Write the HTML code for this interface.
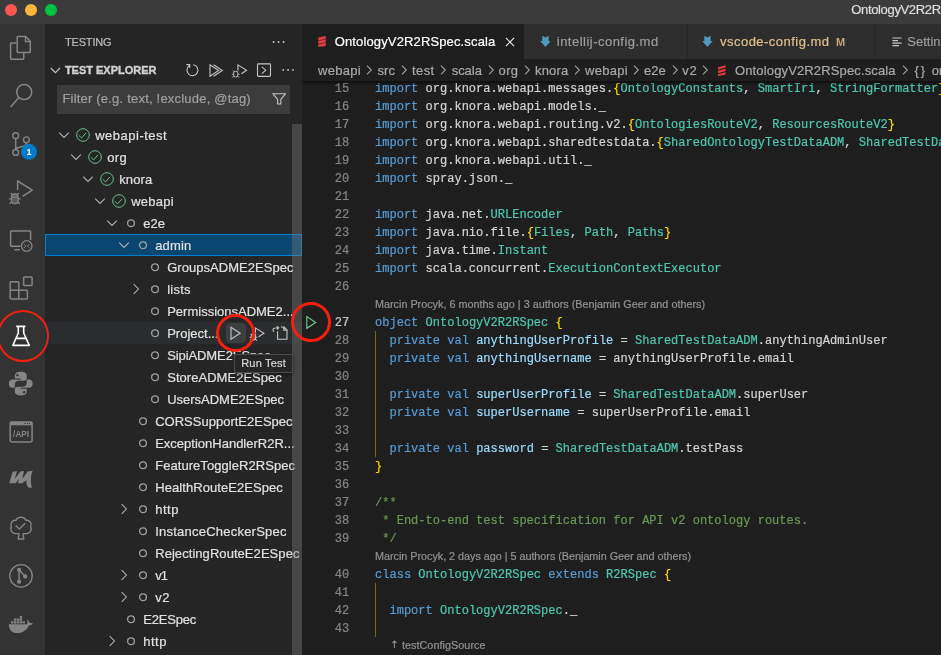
<!DOCTYPE html>
<html>
<head>
<meta charset="utf-8">
<title>OntologyV2R2RSpec.scala</title>
<style>
html,body{margin:0;padding:0;}
body{-webkit-text-stroke-width:0.2px;will-change:transform;width:941px;height:655px;overflow:hidden;background:#1e1e1e;position:relative;font-family:"Liberation Sans",sans-serif;font-size:13px;color:#cccccc;}
*{box-sizing:border-box;}
.abs{position:absolute;}
#titlebar{left:0;top:0;width:941px;height:24px;background:#3b3b3b;}
.tl{position:absolute;top:4px;width:12px;height:12px;border-radius:50%;}
#title{letter-spacing:-0.350px;position:absolute;left:851.300px;top:2px;font-size:13px;color:#dedede;white-space:nowrap;}
#activity{left:0;top:24px;width:45px;height:631px;background:#333333;}
#activity svg{position:absolute;}
#sidebar{left:45px;top:24px;width:257px;height:631px;background:#252526;overflow:hidden;}
#editor{left:302px;top:24px;width:639px;height:631px;background:#1e1e1e;overflow:hidden;}
.sbtitle{position:absolute;left:19.900px;top:12px;font-size:11px;color:#bbbbbb;letter-spacing:0.45px;}
.sechead{position:absolute;left:19.900px;top:40px;font-size:11px;font-weight:bold;color:#d0d0d0;-webkit-text-stroke-width:0.4px;}
#sidebar>svg{position:absolute;z-index:2;}
#filter{position:absolute;left:12px;top:60.800px;width:233px;height:28.800px;background:#3c3c3c;}
#filter span{position:absolute;left:5.4px;top:6px;font-size:13px;color:#a0a0a0;white-space:nowrap;}
#filter svg{position:absolute;}
.row{position:absolute;left:0;width:257px;height:22px;line-height:22px;white-space:nowrap;color:#e0e0e0;font-size:13px;}
.row .t{position:absolute;top:1px;}
.row svg{position:absolute;}
.sel{position:absolute;left:0;top:0;width:257px;height:22px;background:#094771;border:1px solid #007fd4;}
.hov{position:absolute;left:0;top:0;width:257px;height:22px;background:#2a2d2e;}
#sscroll{position:absolute;left:247px;top:100px;width:10px;height:531px;background:rgba(121,121,121,0.4);z-index:5;}
#tabs{position:absolute;left:0;top:0;width:639px;height:35px;background:#252526;z-index:4;}
.tab{position:absolute;top:0;height:35px;background:#2d2d2d;font-size:13px;line-height:35px;white-space:nowrap;}
.tab .lbl{position:absolute;top:0;}
.tab svg{position:absolute;}
#crumbs{position:absolute;left:0;top:35px;width:639px;height:22px;background:#1e1e1e;line-height:22px;font-size:13px;color:#a9a9a9;white-space:nowrap;z-index:3;box-shadow:0 2px 3px rgba(0,0,0,0.55);}
#crumbs span{position:absolute;top:0.700px;}
#crumbs svg{position:absolute;}
#code{position:absolute;left:0;top:0;width:639px;height:631px;font-family:"Liberation Mono",monospace;font-size:12.04px;color:#d4d4d4;}
#code svg{position:absolute;}
.ln{position:absolute;left:0;height:18px;line-height:19.400px;white-space:pre;}
.ln .n{position:absolute;left:0;width:47.200px;text-align:right;color:#858585;}
.ln .n.act{color:#c6c6c6;}
.ln .c{position:absolute;left:73px;}
.lens{position:absolute;left:73px;height:18px;line-height:16.600px;font-family:"Liberation Sans",sans-serif;font-size:10.8px;color:#939393;white-space:nowrap;}
.guide{position:absolute;width:1px;background:#74651a;}
.k{color:#569cd6}.ty{color:#4ec9b0}.v{color:#9cdcfe}.cm{color:#6a9955}.b{color:#ffd700}
.ring{position:absolute;border:3px solid #f3200f;border-radius:50%;z-index:20;}
#tooltip{position:absolute;left:233.900px;top:354px;width:58.700px;height:18.500px;background:#252526;border:1px solid #4a4a4a;font-size:11px;line-height:16px;color:#d8d8d8;z-index:15;white-space:nowrap;box-shadow:-1.500px 0 0 #252526,0 1px 3px rgba(0,0,0,0.5);}
#tooltip span{position:absolute;left:6.300px;top:0px;}

</style>
</head>
<body>
<div id="titlebar" class="abs">
  <div class="tl" style="left:5px;background:#ff5651"></div>
  <div class="tl" style="left:25px;background:#ffb63b"></div>
  <div class="tl" style="left:45px;background:#00c544"></div>
  <div id="title">OntologyV2R2RSpec.scala — webapi</div>
</div>
<div id="activity" class="abs">
<svg style="left:0;top:0" width="45" height="631" viewBox="0 24 45 631" fill="none" stroke="#858585" stroke-width="1.5" stroke-linejoin="round">
<!-- files -->
<path d="M17.9 36.6h7.8l4.6 4.6v10.7q0 .7-.7.7H17.9q-.7 0-.7-.7V37.3q0-.7.7-.7z"/>
<path d="M25.4 36.9v4.6h4.6" stroke-width="1.3"/>
<path d="M16.6 43h-5.3q-.7 0-.7.7v14.8q0 .7.7.7H23q.7 0 .7-.7v-5.2"/>
<!-- search -->
<circle cx="24.2" cy="92.1" r="7.5"/>
<path d="M18.9 97.6L10.6 106.9"/>
<!-- scm -->
<g stroke-width="1.4">
<circle cx="15.7" cy="135.7" r="2.9"/><circle cx="15.7" cy="152.4" r="2.9"/><circle cx="26.4" cy="139.8" r="2.9"/>
<path d="M15.7 138.6V149.5M26.4 142.7C26.4 147.5 19 146.3 15.9 148.6"/>
</g>
<circle cx="29" cy="151.8" r="8" fill="#007acc" stroke="none"/>
<text x="29" y="155" font-family="Liberation Sans, sans-serif" font-size="9" font-weight="bold" fill="#ffffff" stroke="none" text-anchor="middle">1</text>
<!-- debug -->
<path d="M17.6 190V181L32.2 190.2L22.6 196.4"/>
<g stroke-width="1.3">
<path d="M11.5 197.2q0-3.2 3.3-3.2t3.3 3.2v3.4q0 3.2-3.3 3.2t-3.3-3.2z" fill="#5a5a5a"/>
<path d="M12.3 194.8l-1.6-1.8M17.3 194.8l1.6-1.8M11.5 198.9H8.9M18.1 198.9h2.6M11.8 201.8l-2.2 2M17.8 201.8l2.2 2M11.5 197.2h6.6"/>
</g>
<!-- remote explorer -->
<path d="M20.5 246.3H11.3q-.7 0-.7-.7V231.7q0-.7.7-.7h18.6q.7 0 .7.7v8.3M14.5 249.8h5.3"/>
<circle cx="26.7" cy="246" r="5.3" stroke-width="1.3"/>
<path d="M24.2 244.2l1.7 1.8l-1.7 1.8M29.2 244.2l-1.7 1.8l1.7 1.8" stroke-width="1"/>
<!-- extensions -->
<path d="M10.9 281.7h7.2q.7 0 .7.7v7.9h7.9q.7 0 .7.7v7.2q0 .7-.7.7H10.9q-.7 0-.7-.7V282.4q0-.7.7-.7zM10.2 290.3h8.6v8.6"/>
<rect x="23.6" y="277.1" width="8.5" height="8.3" rx="1"/>
<!-- flask -->
<g stroke="#ffffff" stroke-width="1.6">
<path d="M16.2 326.4h9.2M18.3 326.4v6.6L12.9 345.4H29.3L23.7 333v-6.6M15.5 338.4h11.2"/>
</g>
<!-- python -->
<g transform="translate(8.9 371.8) scale(0.99)" fill="#858585" stroke="none" fill-rule="evenodd">
<path d="M11.9 0C8 0 6 1.5 6 4v2.8h6.1v1H3.6C1.3 7.800 0 9.800 0 12s1.200 4.200 3.600 4.200H6V13C6 10.600 7.600 9 9.900 9h5.300C17 9 18 8 18 6.200V4C18 1.500 15.600 0 11.900 0zM8.600 2.200a1.200 1.200 0 1 1 0 2.400a1.200 1.200 0 0 1 0-2.400z"/>
<path d="M12.100 24C16 24 18 22.500 18 20v-2.800h-6.100v-1h8.500c2.300 0 3.600-2 3.600-4.200s-1.200-4.200-3.600-4.200H18V11c0 2.400-1.600 4-3.900 4H8.800C7 15 6 16 6 17.800V20c0 2.500 2.400 4 6.100 4zM15.400 21.800a1.200 1.200 0 1 1 0-2.400a1.200 1.200 0 0 1 0 2.400z"/>
</g>
<!-- api -->
<rect x="10.2" y="422" width="21.9" height="19.9" rx="1.4"/>
<path d="M10.2 423.6h21.9" stroke-width="3.4"/>
<path d="M25 423.4h.1M27.2 423.4h.1M29.400 423.4h.1" stroke="#333" stroke-width="1.1" stroke-linecap="round"/>
<text x="21.1" y="437" font-family="Liberation Sans, sans-serif" font-size="8.6" font-weight="bold" fill="#858585" stroke="none" text-anchor="middle" textLength="16" lengthAdjust="spacingAndGlyphs">/API</text>
<!-- metals -->
<path fill="#858585" stroke="none" d="M9.2 483.200L12.600 472L17 471L14.800 479L20.300 471.600L24 471L22.300 479L27.600 471.600L32.700 470.800C30.600 475 30.400 482 31.900 487.600C28.300 488.800 26.200 486 26.400 480.200L22.200 483.200L18 483.200L19 478.700L15.600 483.200Z"/>
<!-- tree check -->
<g stroke-width="1.4">
<path d="M18.400 533.400C13.500 534.800 9.400 531.300 11.300 527C9.600 523.400 12.500 519.800 16 520.400C17.500 516.200 24.500 516.200 26 520.400C29.500 519.800 32.400 523.400 30.700 527C32.600 531.300 28.500 534.800 23.600 533.400"/>
<path d="M19.100 533L18.200 539H23.800L22.900 533"/>
<path d="M15.700 525.500L19.400 528.900L25.200 523.200"/>
</g>
<!-- git graph -->
<g stroke-width="1.3">
<circle cx="21" cy="575.900" r="11.200"/>
<path d="M19.100 569.800V581.700M19.100 569.800L25.200 576.400" stroke-width="1.400"/>
<circle cx="19.100" cy="569.800" r="1.500" fill="#858585"/><circle cx="19.100" cy="581.700" r="1.500" fill="#858585"/><circle cx="25.200" cy="576.400" r="1.500" fill="#858585"/>
</g>
<!-- docker -->
<g fill="#858585" stroke="none">
<path d="M8.800 624.200H26.800C27.800 622.800 27.700 620.800 27 619.400C28.600 620.400 29.400 621.700 29.600 622.900C30.800 622.500 32 622.700 32.800 623.300C32 625 30.300 625.600 28.900 625.500C26.600 631 21.600 633.100 17.400 633.100C12 633.100 8.800 630 8.800 624.200Z"/>
<path d="M11 621.200h2.400v2.400H11zM13.900 621.200h2.400v2.400h-2.400zM16.800 621.200h2.400v2.400h-2.400zM19.700 621.200h2.400v2.400h-2.400zM22.600 621.200h2.400v2.400h-2.400zM13.900 618.600h2.400v2.200h-2.400zM16.800 618.600h2.400v2.200h-2.400zM19.700 618.600h2.400v2.200h-2.400zM19.700 616h2.400v2.200h-2.400z"/>
</g>
</svg>

</div>
<div id="sidebar" class="abs">
  <div class="sbtitle" style="letter-spacing:-0.153px;">TESTING</div>
  <div class="sechead" style="letter-spacing:-0.014px;">TEST EXPLORER</div>
  <svg style="left:0;top:0" width="257" height="100" viewBox="45 24 257 100" fill="none" stroke="#c5c5c5" stroke-width="1.1">
<!-- title ... -->
<g fill="#c5c5c5" stroke="none"><circle cx="273.600" cy="42" r="0.950"/><circle cx="278.600" cy="42" r="0.950"/><circle cx="283.600" cy="42" r="0.950"/>
<circle cx="283.200" cy="69.900" r="0.950"/><circle cx="288.100" cy="69.900" r="0.950"/><circle cx="293" cy="69.900" r="0.950"/></g>
<!-- section chevron -->
<path d="M50.800 68L55.400 72.600L60 68" stroke-width="1.150"/>
<!-- refresh -->
<path d="M189.300 65.600A5.500 5.500 0 1 0 193.300 64.700M186.400 64.600h3.300v3.300" stroke-width="1.100"/>
<!-- run all -->
<path d="M210 64.700V76.300L218.600 70.500ZM213.600 64.700L222.300 70.500L213.600 76.300" stroke-linejoin="miter"/>
<!-- debug all -->
<path d="M237.900 70V64.900L246.600 70.300L241.400 73.700"/>
<g stroke-width="0.9">
<path d="M233.600 73.200q0-2 2.100-2t2.100 2v1.800q0 2-2.100 2t-2.100-2z"/>
<path d="M234 71.700l-1.100-1.200M237.400 71.700l1.100-1.200M233.600 74.200h-1.800M237.800 74.200h1.800M233.800 76l-1.500 1.500M237.600 76l1.500 1.500"/>
</g>
<!-- terminal box -->
<rect x="257.500" y="63.900" width="13" height="12.500" rx="0.800"/>
<path d="M261.800 66.800L265.800 70.200L261.800 73.600"/>
<!-- filter funnel -->
<path d="M272.800 93.700H285.600L280.800 99.300V104H277.600V99.300Z" stroke-linejoin="round"/>
</svg>

  <div id="filter"><span style="letter-spacing:0.205px;">Filter (e.g. text, !exclude, @tag)</span></div>
  <div id="tree">
<div class="row" style="top:100px"><svg style="left:11px;top:3px" width="16" height="16" viewBox="0 0 16 16"><path d="M3.2 5.7 L8 10.4 L12.8 5.7" fill="none" stroke="#b4b4b4" stroke-width="1.05"/></svg><svg style="left:30px;top:3px" width="16" height="16" viewBox="0 0 16 16"><circle cx="8" cy="8" r="6.3" fill="none" stroke="#6cc08a" stroke-width="1"/><path d="M3.9 8.4 L6.5 10.9 L11 5.9" fill="none" stroke="#6cc08a" stroke-width="1"/></svg><span class="t" style="left:50.2px;letter-spacing:0.501px;">webapi-test</span></div>
<div class="row" style="top:122px"><svg style="left:23px;top:3px" width="16" height="16" viewBox="0 0 16 16"><path d="M3.2 5.7 L8 10.4 L12.8 5.7" fill="none" stroke="#b4b4b4" stroke-width="1.05"/></svg><svg style="left:42px;top:3px" width="16" height="16" viewBox="0 0 16 16"><circle cx="8" cy="8" r="6.3" fill="none" stroke="#6cc08a" stroke-width="1"/><path d="M3.9 8.4 L6.5 10.9 L11 5.9" fill="none" stroke="#6cc08a" stroke-width="1"/></svg><span class="t" style="left:62.2px;letter-spacing:0.334px;">org</span></div>
<div class="row" style="top:144px"><svg style="left:35px;top:3px" width="16" height="16" viewBox="0 0 16 16"><path d="M3.2 5.7 L8 10.4 L12.8 5.7" fill="none" stroke="#b4b4b4" stroke-width="1.05"/></svg><svg style="left:54px;top:3px" width="16" height="16" viewBox="0 0 16 16"><circle cx="8" cy="8" r="6.3" fill="none" stroke="#6cc08a" stroke-width="1"/><path d="M3.9 8.4 L6.5 10.9 L11 5.9" fill="none" stroke="#6cc08a" stroke-width="1"/></svg><span class="t" style="left:74.2px;letter-spacing:0.154px;">knora</span></div>
<div class="row" style="top:166px"><svg style="left:47px;top:3px" width="16" height="16" viewBox="0 0 16 16"><path d="M3.2 5.7 L8 10.4 L12.8 5.7" fill="none" stroke="#b4b4b4" stroke-width="1.05"/></svg><svg style="left:66px;top:3px" width="16" height="16" viewBox="0 0 16 16"><circle cx="8" cy="8" r="6.3" fill="none" stroke="#6cc08a" stroke-width="1"/><path d="M3.9 8.4 L6.5 10.9 L11 5.9" fill="none" stroke="#6cc08a" stroke-width="1"/></svg><span class="t" style="left:86.2px;letter-spacing:0.266px;">webapi</span></div>
<div class="row" style="top:188px"><svg style="left:59px;top:3px" width="16" height="16" viewBox="0 0 16 16"><path d="M3.2 5.7 L8 10.4 L12.8 5.7" fill="none" stroke="#b4b4b4" stroke-width="1.05"/></svg><svg style="left:77.5px;top:3px" width="16" height="16" viewBox="0 0 16 16"><circle cx="8" cy="8.2" r="3.4" fill="none" stroke="#9c9c9c" stroke-width="1.35"/></svg><span class="t" style="left:98.2px;letter-spacing:0.032px;">e2e</span></div>
<div class="row" style="top:210px"><div class="sel"></div><svg style="left:71px;top:3px" width="16" height="16" viewBox="0 0 16 16"><path d="M3.2 5.7 L8 10.4 L12.8 5.7" fill="none" stroke="#b4b4b4" stroke-width="1.05"/></svg><svg style="left:89.5px;top:3px" width="16" height="16" viewBox="0 0 16 16"><circle cx="8" cy="8.2" r="3.4" fill="none" stroke="#9c9c9c" stroke-width="1.35"/></svg><span class="t" style="left:110.2px;letter-spacing:0.156px;">admin</span></div>
<div class="row" style="top:232px"><svg style="left:101.5px;top:3px" width="16" height="16" viewBox="0 0 16 16"><circle cx="8" cy="8.2" r="3.4" fill="none" stroke="#9c9c9c" stroke-width="1.35"/></svg><span class="t" style="left:122.2px;letter-spacing:0.035px;">GroupsADME2ESpec</span></div>
<div class="row" style="top:254px"><svg style="left:83px;top:3px" width="16" height="16" viewBox="0 0 16 16"><path d="M5.7 3.2 L10.4 8 L5.7 12.8" fill="none" stroke="#b4b4b4" stroke-width="1.05"/></svg><svg style="left:101.5px;top:3px" width="16" height="16" viewBox="0 0 16 16"><circle cx="8" cy="8.2" r="3.4" fill="none" stroke="#9c9c9c" stroke-width="1.35"/></svg><span class="t" style="left:122.2px;letter-spacing:0.222px;">lists</span></div>
<div class="row" style="top:276px"><svg style="left:101.5px;top:3px" width="16" height="16" viewBox="0 0 16 16"><circle cx="8" cy="8.2" r="3.4" fill="none" stroke="#9c9c9c" stroke-width="1.35"/></svg><span class="t" style="left:122.2px;">PermissionsADME2...</span></div>
<div class="row" style="top:298px"><div class="hov"></div><svg style="left:101.5px;top:3px" width="16" height="16" viewBox="0 0 16 16"><circle cx="8" cy="8.2" r="3.4" fill="none" stroke="#9c9c9c" stroke-width="1.35"/></svg><span class="t" style="left:122.2px;">Project...</span></div>
<div class="row" style="top:320px"><svg style="left:101.5px;top:3px" width="16" height="16" viewBox="0 0 16 16"><circle cx="8" cy="8.2" r="3.4" fill="none" stroke="#9c9c9c" stroke-width="1.35"/></svg><span class="t" style="left:122.2px;letter-spacing:-0.092px;">SipiADME2ESpec</span></div>
<div class="row" style="top:342px"><svg style="left:101.5px;top:3px" width="16" height="16" viewBox="0 0 16 16"><circle cx="8" cy="8.2" r="3.4" fill="none" stroke="#9c9c9c" stroke-width="1.35"/></svg><span class="t" style="left:122.2px;letter-spacing:0.035px;">StoreADME2ESpec</span></div>
<div class="row" style="top:364px"><svg style="left:101.5px;top:3px" width="16" height="16" viewBox="0 0 16 16"><circle cx="8" cy="8.2" r="3.4" fill="none" stroke="#9c9c9c" stroke-width="1.35"/></svg><span class="t" style="left:122.2px;letter-spacing:-0.01px;">UsersADME2ESpec</span></div>
<div class="row" style="top:386px"><svg style="left:89.5px;top:3px" width="16" height="16" viewBox="0 0 16 16"><circle cx="8" cy="8.2" r="3.4" fill="none" stroke="#9c9c9c" stroke-width="1.35"/></svg><span class="t" style="left:110.2px;letter-spacing:0.006px;">CORSSupportE2ESpec</span></div>
<div class="row" style="top:408px"><svg style="left:89.5px;top:3px" width="16" height="16" viewBox="0 0 16 16"><circle cx="8" cy="8.2" r="3.4" fill="none" stroke="#9c9c9c" stroke-width="1.35"/></svg><span class="t" style="left:110.2px;">ExceptionHandlerR2R...</span></div>
<div class="row" style="top:430px"><svg style="left:89.5px;top:3px" width="16" height="16" viewBox="0 0 16 16"><circle cx="8" cy="8.2" r="3.4" fill="none" stroke="#9c9c9c" stroke-width="1.35"/></svg><span class="t" style="left:110.2px;letter-spacing:0.053px;">FeatureToggleR2RSpec</span></div>
<div class="row" style="top:452px"><svg style="left:89.5px;top:3px" width="16" height="16" viewBox="0 0 16 16"><circle cx="8" cy="8.2" r="3.4" fill="none" stroke="#9c9c9c" stroke-width="1.35"/></svg><span class="t" style="left:110.2px;letter-spacing:0.068px;">HealthRouteE2ESpec</span></div>
<div class="row" style="top:474px"><svg style="left:71px;top:3px" width="16" height="16" viewBox="0 0 16 16"><path d="M5.7 3.2 L10.4 8 L5.7 12.8" fill="none" stroke="#b4b4b4" stroke-width="1.05"/></svg><svg style="left:89.5px;top:3px" width="16" height="16" viewBox="0 0 16 16"><circle cx="8" cy="8.2" r="3.4" fill="none" stroke="#9c9c9c" stroke-width="1.35"/></svg><span class="t" style="left:110.2px;letter-spacing:0.528px;">http</span></div>
<div class="row" style="top:496px"><svg style="left:89.5px;top:3px" width="16" height="16" viewBox="0 0 16 16"><circle cx="8" cy="8.2" r="3.4" fill="none" stroke="#9c9c9c" stroke-width="1.35"/></svg><span class="t" style="left:110.2px;letter-spacing:0.227px;">InstanceCheckerSpec</span></div>
<div class="row" style="top:518px"><svg style="left:89.5px;top:3px" width="16" height="16" viewBox="0 0 16 16"><circle cx="8" cy="8.2" r="3.4" fill="none" stroke="#9c9c9c" stroke-width="1.35"/></svg><span class="t" style="left:110.2px;letter-spacing:0.057px;">RejectingRouteE2ESpec</span></div>
<div class="row" style="top:540px"><svg style="left:71px;top:3px" width="16" height="16" viewBox="0 0 16 16"><path d="M5.7 3.2 L10.4 8 L5.7 12.8" fill="none" stroke="#b4b4b4" stroke-width="1.05"/></svg><svg style="left:89.5px;top:3px" width="16" height="16" viewBox="0 0 16 16"><circle cx="8" cy="8.2" r="3.4" fill="none" stroke="#9c9c9c" stroke-width="1.35"/></svg><span class="t" style="left:110.2px;letter-spacing:-0.917px;">v1</span></div>
<div class="row" style="top:562px"><svg style="left:71px;top:3px" width="16" height="16" viewBox="0 0 16 16"><path d="M5.7 3.2 L10.4 8 L5.7 12.8" fill="none" stroke="#b4b4b4" stroke-width="1.05"/></svg><svg style="left:89.5px;top:3px" width="16" height="16" viewBox="0 0 16 16"><circle cx="8" cy="8.2" r="3.4" fill="none" stroke="#9c9c9c" stroke-width="1.35"/></svg><span class="t" style="left:110.2px;letter-spacing:0.633px;">v2</span></div>
<div class="row" style="top:584px"><svg style="left:77.5px;top:3px" width="16" height="16" viewBox="0 0 16 16"><circle cx="8" cy="8.2" r="3.4" fill="none" stroke="#9c9c9c" stroke-width="1.35"/></svg><span class="t" style="left:98.2px;letter-spacing:-0.172px;">E2ESpec</span></div>
<div class="row" style="top:606px"><svg style="left:59px;top:3px" width="16" height="16" viewBox="0 0 16 16"><path d="M5.7 3.2 L10.4 8 L5.7 12.8" fill="none" stroke="#b4b4b4" stroke-width="1.05"/></svg><svg style="left:77.5px;top:3px" width="16" height="16" viewBox="0 0 16 16"><circle cx="8" cy="8.2" r="3.4" fill="none" stroke="#9c9c9c" stroke-width="1.35"/></svg><span class="t" style="left:98.2px;letter-spacing:0.528px;">http</span></div>
  </div>
  <div id="sscroll"></div>
</div>
<div id="editor" class="abs">
  <div id="code">
<div class="ln" style="top:56px"><span class="n">15</span><span class="c"><span class="k">import</span> org.knora.webapi.messages.<span class="b">{</span><span class="ty">OntologyConstants</span>, <span class="ty">SmartIri</span>, <span class="ty">StringFormatter</span><span class="b">}</span></span></div>
<div class="ln" style="top:74px"><span class="n">16</span><span class="c"><span class="k">import</span> org.knora.webapi.models._</span></div>
<div class="ln" style="top:92px"><span class="n">17</span><span class="c"><span class="k">import</span> org.knora.webapi.routing.v2.<span class="b">{</span><span class="ty">OntologiesRouteV2</span>, <span class="ty">ResourcesRouteV2</span><span class="b">}</span></span></div>
<div class="ln" style="top:110px"><span class="n">18</span><span class="c"><span class="k">import</span> org.knora.webapi.sharedtestdata.<span class="b">{</span><span class="ty">SharedOntologyTestDataADM</span>, <span class="ty">SharedTestDataADM</span><span class="b">}</span></span></div>
<div class="ln" style="top:128px"><span class="n">19</span><span class="c"><span class="k">import</span> org.knora.webapi.util._</span></div>
<div class="ln" style="top:146px"><span class="n">20</span><span class="c"><span class="k">import</span> spray.json._</span></div>
<div class="ln" style="top:164px"><span class="n">21</span><span class="c"></span></div>
<div class="ln" style="top:182px"><span class="n">22</span><span class="c"><span class="k">import</span> java.net.<span class="ty">URLEncoder</span></span></div>
<div class="ln" style="top:200px"><span class="n">23</span><span class="c"><span class="k">import</span> java.nio.file.<span class="b">{</span><span class="ty">Files</span>, <span class="ty">Path</span>, <span class="ty">Paths</span><span class="b">}</span></span></div>
<div class="ln" style="top:218px"><span class="n">24</span><span class="c"><span class="k">import</span> java.time.<span class="ty">Instant</span></span></div>
<div class="ln" style="top:236px"><span class="n">25</span><span class="c"><span class="k">import</span> scala.concurrent.<span class="ty">ExecutionContextExecutor</span></span></div>
<div class="ln" style="top:254px"><span class="n">26</span><span class="c"></span></div>
<div class="lens" style="top:272px;letter-spacing:0.002px;">Marcin Procyk, 6 months ago | 3 authors (Benjamin Geer and others)</div>
<div class="ln" style="top:290px"><span class="n act">27</span><span class="c"><span class="k">object</span> <span class="ty">OntologyV2R2RSpec</span> <span class="b">{</span></span></div>
<div class="ln" style="top:308px"><span class="n">28</span><span class="c">  <span class="k">private</span> <span class="k">val</span> <span class="v">anythingUserProfile</span> = <span class="ty">SharedTestDataADM</span>.anythingAdminUser</span></div>
<div class="ln" style="top:326px"><span class="n">29</span><span class="c">  <span class="k">private</span> <span class="k">val</span> <span class="v">anythingUsername</span> = anythingUserProfile.email</span></div>
<div class="ln" style="top:344px"><span class="n">30</span><span class="c"></span></div>
<div class="ln" style="top:362px"><span class="n">31</span><span class="c">  <span class="k">private</span> <span class="k">val</span> <span class="v">superUserProfile</span> = <span class="ty">SharedTestDataADM</span>.superUser</span></div>
<div class="ln" style="top:380px"><span class="n">32</span><span class="c">  <span class="k">private</span> <span class="k">val</span> <span class="v">superUsername</span> = superUserProfile.email</span></div>
<div class="ln" style="top:398px"><span class="n">33</span><span class="c"></span></div>
<div class="ln" style="top:416px"><span class="n">34</span><span class="c">  <span class="k">private</span> <span class="k">val</span> <span class="v">password</span> = <span class="ty">SharedTestDataADM</span>.testPass</span></div>
<div class="ln" style="top:434px"><span class="n">35</span><span class="c"><span class="b">}</span></span></div>
<div class="ln" style="top:452px"><span class="n">36</span><span class="c"></span></div>
<div class="ln" style="top:470px"><span class="n">37</span><span class="c"><span class="cm">/**</span></span></div>
<div class="ln" style="top:488px"><span class="n">38</span><span class="c"><span class="cm"> * End-to-end test specification for API v2 ontology routes.</span></span></div>
<div class="ln" style="top:506px"><span class="n">39</span><span class="c"><span class="cm"> */</span></span></div>
<div class="lens" style="top:524px;letter-spacing:-0.02px;">Marcin Procyk, 2 days ago | 5 authors (Benjamin Geer and others)</div>
<div class="ln" style="top:542px"><span class="n">40</span><span class="c"><span class="k">class</span> <span class="ty">OntologyV2R2RSpec</span> <span class="k">extends</span> <span class="ty">R2RSpec</span> <span class="b">{</span></span></div>
<div class="ln" style="top:560px"><span class="n">41</span><span class="c"></span></div>
<div class="ln" style="top:578px"><span class="n">42</span><span class="c">  <span class="k">import</span> <span class="ty">OntologyV2R2RSpec</span>._</span></div>
<div class="ln" style="top:596px"><span class="n">43</span><span class="c"></span></div>
<div class="lens" style="top:613px;left:88px;"><span style="position:absolute;left:0;top:0.4px;font-family:'DejaVu Sans',sans-serif;font-size:10px">↑</span><span style="position:absolute;left:11.900px;letter-spacing:0.054px;">testConfigSource</span></div>
<div class="guide" style="left:73px;top:307px;height:126px"></div>
<div class="guide" style="left:73px;top:559px;height:54px"></div>
  </div>
  <div id="tabs">
<div class="tab" style="left:0;width:221.500px;background:#1e1e1e;color:#ffffff">
<svg style="left:15.900px;top:12px" width="8" height="11" viewBox="0 0 7.500 11"><path d="M0 1.400L7.500 0V3L0 4.400ZM0 4.900L7.500 3.500V6.500L0 7.900ZM0 8.400L7.500 7V10L0 11Z" fill="#de3d46"/></svg>
<span class="lbl" id="t1" style="left:32.700px;letter-spacing:0.138px;">OntologyV2R2RSpec.scala</span>
<svg style="left:199.800px;top:9.800px" width="16" height="16" viewBox="0 0 16 16"><path d="M3.900 3.900L12.100 12.100M12.100 3.900L3.900 12.100" stroke="#e8e8e8" stroke-width="1.200" fill="none"/></svg>
</div>
<div class="tab" style="left:221.500px;width:163.500px;color:#9d9d9d">
<svg style="left:0;top:0" width="40" height="35" viewBox="0 0 40 35"><path d="M18.300 11.700L21.450 13.600L24.600 11.700V17.100H26.700L21.450 23L16.200 17.100H18.300Z" fill="#519aba"/></svg>
<span class="lbl" id="t2" style="left:33.300px;letter-spacing:0.478px;">intellij-config.md</span>
</div>
<div class="tab" style="left:386px;width:186px;color:#e2c08d">
<svg style="left:-1.750px;top:0" width="40" height="35" viewBox="0 0 40 35"><path d="M18.300 11.700L21.450 13.600L24.600 11.700V17.100H26.700L21.450 23L16.200 17.100H18.300Z" fill="#519aba"/></svg>
<span class="lbl" id="t3" style="left:32px;letter-spacing:0.476px;">vscode-config.md</span>
<span class="lbl" id="t3m" style="left:147.900px;top:1.200px;font-size:11px;font-weight:bold;color:#c3a478;-webkit-text-stroke-width:0">M</span>
</div>
<div class="tab" style="left:573px;width:100px;color:#9d9d9d">
<svg style="left:17px;top:11px" width="14" height="14" viewBox="0 0 14 14"><path d="M0.400 3h9.200M0.400 5.600h5.600M0.400 8.100h9.200M0.400 10.600h6.600" stroke="#c8c8c8" stroke-width="1.150" fill="none"/></svg>
<span class="lbl" id="t4" style="left:32.300px">Settings</span>
</div>

  </div>
  <div id="crumbs">
<span style="left:16px;letter-spacing:0.266px;">webapi</span>
<svg style="left:59.2px;top:3px" width="16" height="16" viewBox="0 0 16 16"><path d="M6 3.6 L10.3 8 L6 12.4" fill="none" stroke="#a0a0a0" stroke-width="1.1"/></svg>
<span style="left:75.5px;letter-spacing:0.119px;">src</span>
<svg style="left:93.5px;top:3px" width="16" height="16" viewBox="0 0 16 16"><path d="M6 3.6 L10.3 8 L6 12.4" fill="none" stroke="#a0a0a0" stroke-width="1.1"/></svg>
<span style="left:109.9px;letter-spacing:0.458px;">test</span>
<svg style="left:133.2px;top:3px" width="16" height="16" viewBox="0 0 16 16"><path d="M6 3.6 L10.3 8 L6 12.4" fill="none" stroke="#a0a0a0" stroke-width="1.1"/></svg>
<span style="left:149.7px;letter-spacing:-0.032px;">scala</span>
<svg style="left:180.6px;top:3px" width="16" height="16" viewBox="0 0 16 16"><path d="M6 3.6 L10.3 8 L6 12.4" fill="none" stroke="#a0a0a0" stroke-width="1.1"/></svg>
<span style="left:196.6px;letter-spacing:0.334px;">org</span>
<svg style="left:216.8px;top:3px" width="16" height="16" viewBox="0 0 16 16"><path d="M6 3.6 L10.3 8 L6 12.4" fill="none" stroke="#a0a0a0" stroke-width="1.1"/></svg>
<span style="left:233px;letter-spacing:0.154px;">knora</span>
<svg style="left:266.7px;top:3px" width="16" height="16" viewBox="0 0 16 16"><path d="M6 3.6 L10.3 8 L6 12.4" fill="none" stroke="#a0a0a0" stroke-width="1.1"/></svg>
<span style="left:283px;letter-spacing:0.266px;">webapi</span>
<svg style="left:326px;top:3px" width="16" height="16" viewBox="0 0 16 16"><path d="M6 3.6 L10.3 8 L6 12.4" fill="none" stroke="#a0a0a0" stroke-width="1.1"/></svg>
<span style="left:342px;letter-spacing:0.032px;">e2e</span>
<svg style="left:365px;top:3px" width="16" height="16" viewBox="0 0 16 16"><path d="M6 3.6 L10.3 8 L6 12.4" fill="none" stroke="#a0a0a0" stroke-width="1.1"/></svg>
<span style="left:380.3px;letter-spacing:0.63px">v2</span>
<svg style="left:395px;top:3px" width="16" height="16" viewBox="0 0 16 16"><path d="M6 3.6 L10.3 8 L6 12.4" fill="none" stroke="#a0a0a0" stroke-width="1.1"/></svg>
<svg style="left:415px;top:5.5px" width="10" height="11" viewBox="0 0 10 11"><path d="M1 2.300L8.600 0.200V2.600L1 4.700ZM1 5.800L8.600 3.700V6.100L1 8.200ZM1 9.300L8.600 7.200V9.600L1 10.900Z" fill="#e5393f"/></svg>
<span style="left:433px;letter-spacing:0.138px;">OntologyV2R2RSpec.scala</span>
<svg style="left:595px;top:3px" width="16" height="16" viewBox="0 0 16 16"><path d="M6 3.6 L10.3 8 L6 12.4" fill="none" stroke="#a0a0a0" stroke-width="1.1"/></svg>
<span style="left:612.5px;letter-spacing:1.906px;">{}</span>
<span style="left:629.8px;">ontology</span>
  </div>
</div>
<svg id="overlay" style="position:absolute;left:0;top:0;z-index:12" width="941" height="655" viewBox="0 0 941 655" fill="none" stroke="#c5c5c5" stroke-width="1.1">
<!-- hover action: run -->
<rect x="226" y="323" width="20" height="20" rx="4.500" fill="#3b3d3e" stroke="none"/>
<path d="M231 327.300V339.300L240.200 333.300Z" stroke-linejoin="miter"/>
<!-- hover action: debug -->
<path d="M255.400 332.800V327.900L263.900 333.300L258.600 336.800"/>
<g stroke-width="1.050">
<path d="M251.300 336.200q0-2 2.100-2t2.100 2v1.900q0 2-2.100 2t-2.100-2z" fill="#6a6c6c"/>
<path d="M251.700 334.800l-1.100-1.200M255.100 334.800l1.100-1.200M251.300 337.300h-1.800M255.500 337.300h1.800M251.500 339.100l-1.500 1.500M255.300 339.100l1.500 1.500"/>
</g>
<!-- hover action: go to file -->
<path d="M277.600 331.200V339.200H287V330L283.900 327H280.900M283.700 327.200V330.200H286.800" stroke-linejoin="round"/>
<path d="M274 331.900C272 330 272.800 328.200 275.500 328L278.500 327.800M276.800 326.100L278.700 327.800L277.100 329.600"/>
<!-- gutter run -->
<path d="M306.800 316.600V328.300L315.600 322.450Z" stroke="#6cc68b" stroke-width="1.200" stroke-linejoin="miter"/>
</svg>
<div id="tooltip"><span style="letter-spacing:0.198px;">Run Test</span></div>
<div class="ring" style="left:-3.300px;top:309.900px;width:52px;height:52px;border-width:2.900px"></div>
<div class="ring" style="left:215.500px;top:313.800px;width:39px;height:38.300px;border-width:3.500px"></div>
<div class="ring" style="left:291.100px;top:301.600px;width:40.400px;height:40.400px;border-width:3.300px"></div>
</body>
</html>
